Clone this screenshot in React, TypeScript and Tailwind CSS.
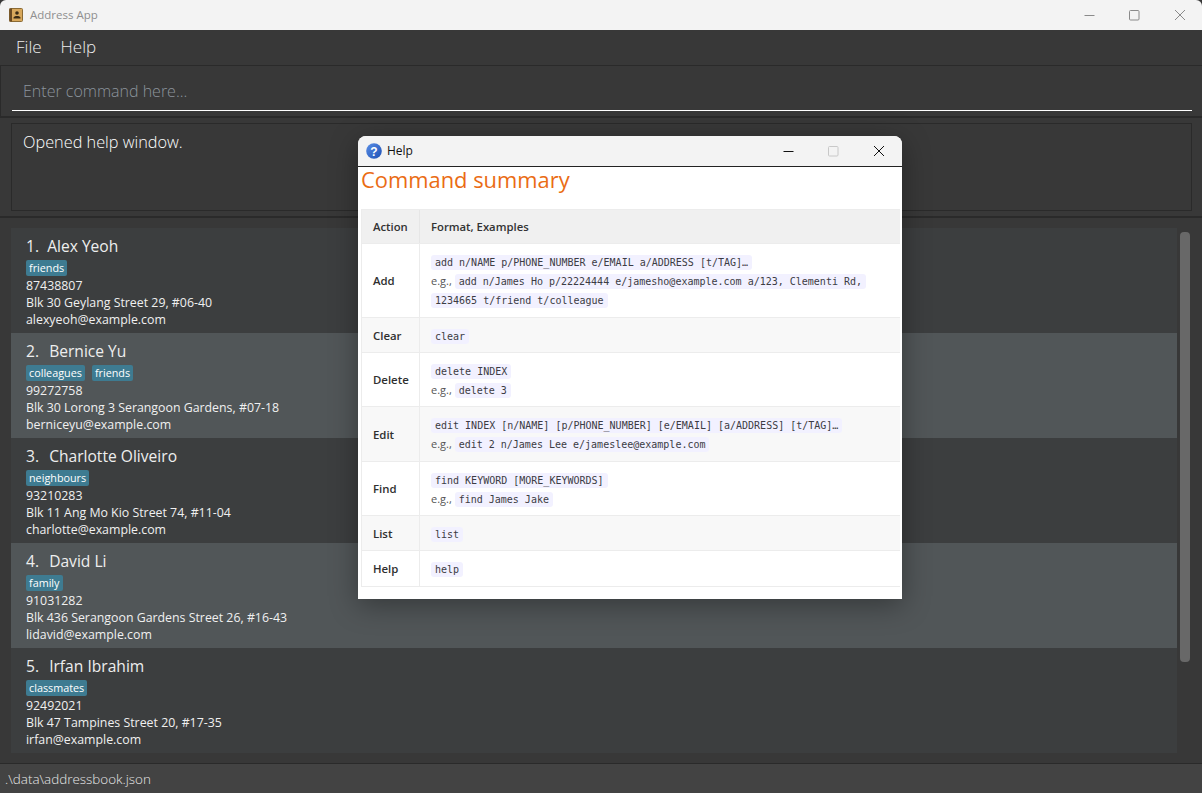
const persons = [
  { index: '1.  ', name: 'Alex Yeoh', tags: ['friends'], phone: '87438807', address: 'Blk 30 Geylang Street 29, #06-40', email: 'alexyeoh@example.com' },
  { index: '2.  ', name: 'Bernice Yu', tags: ['colleagues', 'friends'], phone: '99272758', address: 'Blk 30 Lorong 3 Serangoon Gardens, #07-18', email: 'berniceyu@example.com' },
  { index: '3.  ', name: 'Charlotte Oliveiro', tags: ['neighbours'], phone: '93210283', address: 'Blk 11 Ang Mo Kio Street 74, #11-04', email: 'charlotte@example.com' },
  { index: '4.  ', name: 'David Li', tags: ['family'], phone: '91031282', address: 'Blk 436 Serangoon Gardens Street 26, #16-43', email: 'lidavid@example.com' },
  { index: '5.  ', name: 'Irfan Ibrahim', tags: ['classmates'], phone: '92492021', address: 'Blk 47 Tampines Street 20, #17-35', email: 'irfan@example.com' },
]

function Code({ children }: { children: string }) {
  return (
    <code className="rounded-[3px] bg-[#f2f1ff] px-[4px] py-[2px] font-['DejaVu_Sans_Mono',monospace] text-[10px] text-[#3c3c44] [box-decoration-break:clone]">
      {children}
    </code>
  )
}

function Row({ label, height, shaded, children }: { label: string; height: string; shaded?: boolean; children: React.ReactNode }) {
  return (
    <div className={`flex border-b border-[#ececec] ${height} ${shaded ? 'bg-[#f8f8f8]' : 'bg-white'}`}>
      <div className="flex w-[58px] shrink-0 items-center border-r border-[#ececec] pl-[11px] pt-[1px] text-[11.4px] font-semibold text-[#2f2f2f]">
        {label}
      </div>
      <div className="flex flex-1 flex-col justify-center pl-[11px] pt-[2px] text-[11px] leading-[18px] text-[#555]">{children}</div>
    </div>
  )
}

function PersonCard({ person, even, first }: { person: (typeof persons)[number]; even: boolean; first: boolean }) {
  return (
    <div className={`flex h-[105px] flex-col pl-[15px] pt-[8px] ${even ? 'bg-[#515658]' : 'bg-[#3c3e3f]'}`}>
      <div className="text-[15.6px] leading-[21px] font-medium whitespace-pre text-[#eeeeee]">
        <span className={first ? '' : 'mr-[2px]'}>{person.index}</span>
        {person.name}
      </div>
      <div className="mt-[3px] flex h-[16px] gap-[7px]">
        {person.tags.map((t) => (
          <span key={t} className="rounded-[2px] bg-[#3e7b91] px-[3px] text-[10.8px] leading-[16px] text-white">
            {t}
          </span>
        ))}
      </div>
      <div className="mt-[1px] text-[12.35px] leading-[17px] text-[#f0f0f0]">{person.phone}</div>
      <div className="text-[12.35px] leading-[17px] text-[#f0f0f0]">{person.address}</div>
      <div className="text-[12.35px] leading-[17px] text-[#f0f0f0]">{person.email}</div>
    </div>
  )
}

function HelpWindow() {
  return (
    <div className="absolute top-[136px] left-[358px] h-[463px] w-[544px] overflow-hidden rounded-t-[8px] bg-white shadow-[0_6px_28px_rgba(0,0,0,0.35)]">
      {/* title bar */}
      <div className="flex h-[31px] items-center border-b border-[#222] bg-[#f3f3f3] pl-[8px]">
        <svg width="16" height="16" viewBox="0 0 16 16">
          <defs>
            <linearGradient id="helpBlue" x1="0" y1="0" x2="1" y2="1">
              <stop offset="0" stopColor="#5b8fe6" />
              <stop offset="1" stopColor="#1c4fb4" />
            </linearGradient>
          </defs>
          <circle cx="8" cy="8" r="7.8" fill="url(#helpBlue)" />
          <text x="8" y="12.5" textAnchor="middle" fontSize="12" fontWeight="700" fill="#fff" fontFamily="'Liberation Sans', sans-serif">?</text>
        </svg>
        <span className="ml-[5px] text-[12px] text-[#111]">Help</span>
        <svg className="ml-auto mr-[34px]" width="11" height="11" viewBox="0 0 11 11">
          <path d="M0.5 5.5H10.5" stroke="#111" strokeWidth="1" />
        </svg>
        <svg className="mr-[34px]" width="11" height="11" viewBox="0 0 11 11">
          <rect x="0.5" y="0.5" width="9.5" height="9.5" rx="1" fill="none" stroke="#c8c8c8" />
        </svg>
        <svg className="mr-[17px]" width="12" height="12" viewBox="0 0 12 12">
          <path d="M1 1L11 11M11 1L1 11" stroke="#111" strokeWidth="1" />
        </svg>
      </div>

      <h1 className="-mt-[1px] pl-[3px] text-[21.9px] leading-[28px] font-normal text-[#ea6c14]">Command summary</h1>

      <div className="mx-[3px] mt-[15px] w-[539px] border-l border-[#ececec]">
        <div className="flex h-[35px] items-center border-y border-[#ececec] bg-[#f0f0f0] text-[11.3px] font-semibold text-[#333]">
          <div className="flex h-full w-[58px] items-center border-r border-[#e6e6e6] pl-[11px] pt-[1px]">Action</div>
          <div className="pl-[11px] pt-[1px]">Format, Examples</div>
        </div>
        <Row label="Add" height="h-[74px]">
          <div><Code>add n/NAME p/PHONE_NUMBER e/EMAIL a/ADDRESS [t/TAG]…</Code></div>
          <div>e.g., <Code>add n/James Ho p/22224444 e/jamesho@example.com a/123, Clementi Rd,</Code></div>
          <div><Code>1234665 t/friend t/colleague</Code></div>
        </Row>
        <Row label="Clear" height="h-[35px]" shaded>
          <div><Code>clear</Code></div>
        </Row>
        <Row label="Delete" height="h-[54px]">
          <div><Code>delete INDEX</Code></div>
          <div>e.g., <Code>delete 3</Code></div>
        </Row>
        <Row label="Edit" height="h-[55px]" shaded>
          <div><Code>edit INDEX [n/NAME] [p/PHONE_NUMBER] [e/EMAIL] [a/ADDRESS] [t/TAG]…</Code></div>
          <div>e.g., <Code>edit 2 n/James Lee e/jameslee@example.com</Code></div>
        </Row>
        <Row label="Find" height="h-[54px]">
          <div><Code>find KEYWORD [MORE_KEYWORDS]</Code></div>
          <div>e.g., <Code>find James Jake</Code></div>
        </Row>
        <Row label="List" height="h-[35px]" shaded>
          <div><Code>list</Code></div>
        </Row>
        <Row label="Help" height="h-[36px]">
          <div><Code>help</Code></div>
        </Row>
      </div>
    </div>
  )
}

export default function App() {
  return (
    <div className="relative flex h-[793px] w-[1202px] flex-col overflow-hidden bg-[#383838] font-['Open_Sans',sans-serif]">
      {/* window title bar */}
      <div className="flex h-[30px] shrink-0 items-center rounded-t-[6px] bg-[#f3f3f3] pl-[9px]">
        <svg width="14" height="14" viewBox="0 0 14 14">
          <rect x="0.5" y="0.5" width="13" height="13" rx="1" fill="#d8a85c" stroke="#8a6a35" />
          <rect x="0.5" y="0.5" width="2.5" height="13" fill="#6b4a22" />
          <circle cx="8" cy="5" r="1.8" fill="#3a2a14" />
          <path d="M4.5 10.5H11.5V9.4C10.5 8.4 9.5 8 8 8S5.5 8.4 4.5 9.4Z" fill="#3a2a14" />
        </svg>
        <span className="ml-[7px] text-[11.5px] text-[#8f8f8f]">Address App</span>
        <svg className="ml-auto mr-[34px]" width="11" height="11" viewBox="0 0 11 11">
          <path d="M0.5 5.5H10.5" stroke="#8a8a8a" />
        </svg>
        <svg className="mr-[34px]" width="11" height="11" viewBox="0 0 11 11">
          <rect x="0.5" y="0.5" width="9.5" height="9.5" rx="1" fill="none" stroke="#8a8a8a" />
        </svg>
        <svg className="mr-[16px]" width="12" height="12" viewBox="0 0 12 12">
          <path d="M1 1L11 11M11 1L1 11" stroke="#8a8a8a" />
        </svg>
      </div>

      {/* menu */}
      <div className="flex h-[36px] shrink-0 items-center gap-[19px] border-b border-[#2a2a2a] pb-[1px] pl-[16px] text-[17px] font-light text-[#eeeeee]">
        <span>File</span>
        <span>Help</span>
      </div>

      {/* command box */}
      <div className="h-[52px] shrink-0 border-b-2 border-l border-[#2a2a2a] px-[11px]">
        <div className="flex h-[45px] w-[1180px] items-center border-b-[1.5px] border-white pl-[11px] pt-[5px] text-[16px] font-light text-[#8c949c]">
          Enter command here...
        </div>
      </div>

      {/* result display */}
      <div className="h-[100px] shrink-0 border-b-2 border-[#2a2a2a] px-[11px] pt-[5px]">
        <div className="h-[88px] w-[1181px] border border-[#2a2a2a] pl-[11px] pt-[6px] text-[16.3px] leading-[24px] font-light text-white">
          Opened help window.
        </div>
      </div>

      {/* person list */}
      <div className="flex min-h-0 flex-1 px-[11px] pt-[10px]">
        <div className="h-[525px] w-[1166px] shrink-0">
          {persons.map((p, i) => (
            <PersonCard key={p.email} person={p} even={i % 2 === 1} first={i === 0} />
          ))}
        </div>
        <div className="ml-[3px] mt-[4px] h-[430px] w-[10px] rounded-[4px] bg-[#686868]" />
      </div>

      {/* status bar */}
      <div className="flex h-[30px] shrink-0 items-center border-t border-[#2a2a2a] bg-[#434343] pl-[5px] pt-[2px] text-[13.45px] font-light text-[#e8e8e8]">
        .\data\addressbook.json
      </div>

      <HelpWindow />
    </div>
  )
}
